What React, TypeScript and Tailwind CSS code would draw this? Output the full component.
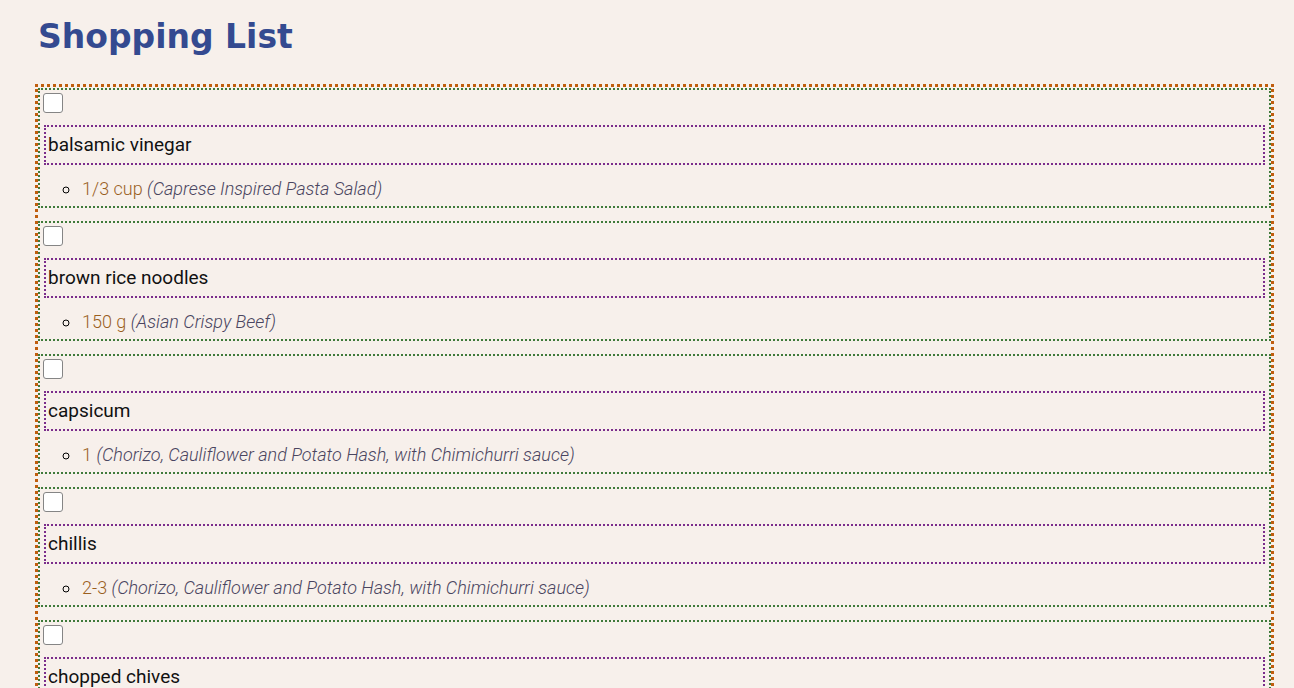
import React from "react";

type Item = {
  name: string;
  qty: string;
  recipe: string;
};

const items: Item[] = [
  { name: "balsamic vinegar", qty: "1/3 cup", recipe: "Caprese Inspired Pasta Salad" },
  { name: "brown rice noodles", qty: "150 g", recipe: "Asian Crispy Beef" },
  { name: "capsicum", qty: "1", recipe: "Chorizo, Cauliflower and Potato Hash, with Chimichurri sauce" },
  { name: "chillis", qty: "2-3", recipe: "Chorizo, Cauliflower and Potato Hash, with Chimichurri sauce" },
  { name: "chopped chives", qty: "1 tbsp", recipe: "Caprese Inspired Pasta Salad" },
  { name: "garlic", qty: "2 cloves", recipe: "Asian Crispy Beef" },
];

function ShoppingItem({ item }: { item: Item }) {
  return (
    <div className="border-2 border-dotted border-[#3f7a3a] mb-[13px] pb-[7px]">
      <div className="h-[35px] pt-[3px] pl-[3px]">
        <input
          type="checkbox"
          className="w-[20px] h-[20px] block appearance-none bg-white border border-[#858585] rounded-[3px]"
        />
      </div>
      <div className="mx-[4px] border-2 border-dotted border-[#7b2d8b] h-[40px] flex items-center pl-[2px] text-[19px] text-[#111]">
        {item.name}
      </div>
      <ul className="mt-[14px] pl-[41px] list-[circle] text-[18px] font-light leading-[20px]">
        <li className="pl-[1px]">
          <span className="text-[#9a5f1e]">{item.qty}</span>{" "}
          <em className="text-[#4a4560]">({item.recipe})</em>
        </li>
      </ul>
    </div>
  );
}

export default function App() {
  return (
    <div
      className="min-h-screen bg-[#f7f0eb] pt-[14px]"
      style={{ fontFamily: "Roboto, 'Liberation Sans', sans-serif" }}
    >
      <h1
        className="ml-[38px] text-[33px] font-bold text-[#344a90] leading-[46px] mb-[24px]"
        style={{ fontFamily: "'DejaVu Sans', 'Liberation Sans', sans-serif" }}
      >
        Shopping List
      </h1>
      <div className="ml-[35px] w-[1239px] border-[3px] border-dotted border-[#c05e0e] pt-[1px]">
        {items.map((item) => (
          <ShoppingItem key={item.name} item={item} />
        ))}
      </div>
    </div>
  );
}
